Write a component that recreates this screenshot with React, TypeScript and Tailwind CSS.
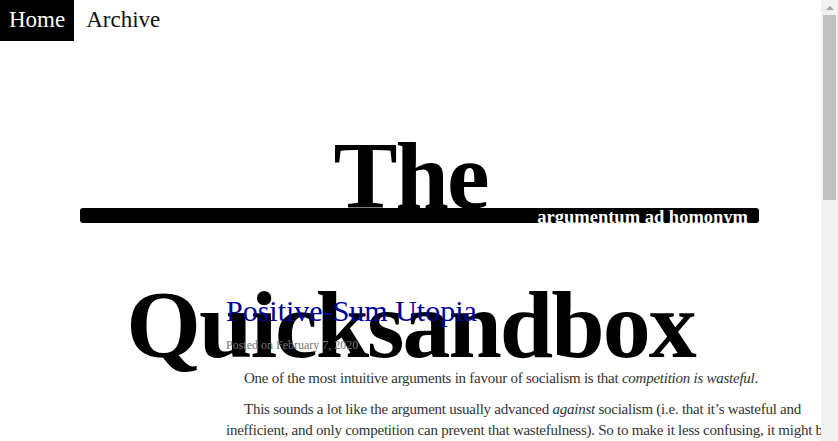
const serif = "font-['Liberation_Serif','Times_New_Roman',serif]";

const Nav = () => (
  <nav className={`flex h-[41px] items-stretch text-[23px] ${serif}`}>
    <a className="flex items-center bg-black px-[9px] text-white" href="#">
      Home
    </a>
    <a className="ml-[3px] flex items-center px-[9px] text-[#111]" href="#">
      Archive
    </a>
  </nav>
);

const Masthead = () => (
  <header className={serif}>
    {/* title overflows its box on purpose, the second line runs over the post */}
    <h1 className="mx-auto mt-[60px] h-[107px] w-[680px] text-center text-[96px] font-bold leading-[149px] tracking-[-2px] text-black">
      The Quicksandbox
    </h1>
    <div className="ml-[80px] h-[15px] w-[679px] overflow-hidden rounded-[3px] bg-black pr-[11px] text-right text-[18.5px] font-bold leading-[19px] text-white">
      argumentum ad homonym
    </div>
  </header>
);

const Post = () => (
  <article className={`ml-[226px] mt-[71px] w-[610px] ${serif}`}>
    <h2 className="text-[30px] leading-[34px] text-[#00009c]">Positive-Sum Utopia</h2>
    <p className="mt-[9px] text-[12px] leading-[16px] text-[#777]">Posted on February 7, 2020</p>
    <div className="mt-[15px] text-[15px] leading-[21px] tracking-[-0.25px] text-[#333]">
      <p className="indent-[18px]">
        One of the most intuitive arguments in favour of socialism is that <em>competition is wasteful</em>.
      </p>
      <p className="mt-[10px] indent-[18px]">
        This sounds a lot like the argument usually advanced <em>against</em> socialism (i.e. that it’s wasteful and
        inefficient, and only competition can prevent that wastefulness). So to make it less confusing, it might be
        better to say that competition is duplicative.
      </p>
    </div>
  </article>
);

const Scrollbar = () => (
  <div className="flex w-[17px] shrink-0 flex-col items-center bg-[#f1f1f1]">
    <div className="flex h-[15px] items-center justify-center">
      <div className="h-0 w-0 border-x-[4px] border-b-[4px] border-x-transparent border-b-[#a3a3a3]" />
    </div>
    <div className="h-[185px] w-[13px] bg-[#c1c1c1]" />
  </div>
);

export default function App() {
  return (
    <div className="flex h-[441px] w-[838px] overflow-hidden bg-white">
      <main className="w-[821px] shrink-0 overflow-hidden">
        <Nav />
        <Masthead />
        <Post />
      </main>
      <Scrollbar />
    </div>
  );
}
